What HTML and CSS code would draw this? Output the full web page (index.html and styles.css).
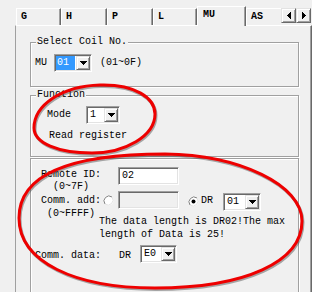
FILE: index.html
```html
<!DOCTYPE html>
<html lang="en">
<head>
    <meta charset="UTF-8">
    <title>MU settings</title>
    <link rel="stylesheet" href="styles.css">
</head>
<body>
  <div class="window">
    <div class="tabs">
      <div class="tab tab-g">G</div>
      <div class="tab tab-h">H</div>
      <div class="tab tab-p">P</div>
      <div class="tab tab-l">L</div>
      <div class="tab active">MU</div>
      <div class="tab last">AS</div>
      <div class="scroll">
        <span class="sbtn"><svg width="4" height="7" viewBox="0 0 4 7"><path d="M4 0v7h-1v-1h-1v-1h-1v-1h-1v-1h1v-1h1v-1h1v-1z"/></svg></span>
        <span class="sbtn"><svg width="4" height="7" viewBox="0 0 4 7"><path d="M0 0v7h1v-1h1v-1h1v-1h1v-1h-1v-1h-1v-1h-1v-1z"/></svg></span>
      </div>
    </div>

    <div class="panel">
      <fieldset class="group">
        <legend>Select Coil No.</legend>
        <div class="coil-row">
          <span>MU</span>
          <div class="combo coil-combo">
            <span class="val sel">01</span>
            <span class="drop"><svg width="7" height="4" viewBox="0 0 7 4"><path d="M0 0h7v1h-1v1h-1v1h-1v1h-1v-1h-1v-1h-1v-1h-1z"/></svg></span>
          </div>
          <span class="range">(01~0F)</span>
        </div>
      </fieldset>

      <fieldset class="group func">
        <legend>Function</legend>
        <div class="mode-row">
          <span>Mode</span>
          <div class="combo mode-combo">
            <span class="val">1</span>
            <span class="drop"><svg width="7" height="4" viewBox="0 0 7 4"><path d="M0 0h7v1h-1v1h-1v1h-1v1h-1v-1h-1v-1h-1v-1h-1z"/></svg></span>
          </div>
        </div>
        <div class="mode-name">Read register</div>
      </fieldset>

      <div class="remote">
        <div class="remote-grid">
          <div class="labels">
            <div class="ln">Remote ID:</div>
            <div class="ln">(0~7F)</div>
            <div class="ln tall gap">Comm. add:</div>
            <div class="ln tall">(0~FFFF)</div>
          </div>
          <div class="inputs">
            <div class="field id-field">02</div>
            <div class="add-row">
              <svg class="radio first" width="11" height="11" viewBox="0 0 11 11">
                <circle cx="5.5" cy="5.5" r="5" fill="#fff"/>
                <path d="M2 9A5 5 0 0 1 9 2" fill="none" stroke="#808080"/>
                <path d="M9 2A5 5 0 0 1 2 9" fill="none" stroke="#e3e3e3"/>
              </svg>
              <div class="field off"></div>
              <svg class="radio on" width="11" height="11" viewBox="0 0 11 11">
                <circle cx="5.5" cy="5.5" r="5" fill="#fff"/>
                <path d="M2 9A5 5 0 0 1 9 2" fill="none" stroke="#808080"/>
                <path d="M9 2A5 5 0 0 1 2 9" fill="none" stroke="#e3e3e3"/>
                <circle cx="5.5" cy="5.5" r="2"/>
              </svg>
              <span class="dr">DR</span>
              <div class="combo dr-combo">
                <span class="val">01</span>
                <span class="drop"><svg width="7" height="4" viewBox="0 0 7 4"><path d="M0 0h7v1h-1v1h-1v1h-1v1h-1v-1h-1v-1h-1v-1h-1z"/></svg></span>
              </div>
            </div>
            <div class="msg">The data length is DR02!The max<br>length of Data is 25!</div>
          </div>
        </div>
        <div class="data-row">
          <span class="lbl">Comm. data:</span>
          <span class="lbl dr2">DR</span>
          <div class="combo data-combo">
            <span class="val">E0</span>
            <span class="drop"><svg width="7" height="4" viewBox="0 0 7 4"><path d="M0 0h7v1h-1v1h-1v1h-1v1h-1v-1h-1v-1h-1v-1h-1z"/></svg></span>
          </div>
        </div>
      </div>
    </div>
  </div>

  <!-- red marks drawn over the dialog -->
  <svg class="marks" width="318" height="298" viewBox="0 0 318 298">
    <g fill="none" stroke-width="3">
      <path d="M100,85 C135,84 155,98 155,114 C155,136 125,153 92,153 C58,153 34,143 34,128 C34,105 62,86 100,85 Z" stroke="rgba(70,70,70,0.45)" transform="translate(1 1.5)"/>
      <path d="M165,154 C240,155 302,185 302,221 C302,262 245,288 155,288 C75,288 19,262 19,218 C19,170 80,154 165,154 Z" stroke="rgba(70,70,70,0.45)" transform="translate(1 1.5)"/>
      <path d="M100,85 C135,84 155,98 155,114 C155,136 125,153 92,153 C58,153 34,143 34,128 C34,105 62,86 100,85 Z" stroke="#ee0000"/>
      <path d="M165,154 C240,155 302,185 302,221 C302,262 245,288 155,288 C75,288 19,262 19,218 C19,170 80,154 165,154 Z" stroke="#ee0000"/>
    </g>
  </svg>
</body>
</html>
```

FILE: styles.css
```css
body {
    margin: 0;
    background: #fff;
    font-family: "Liberation Mono", "DejaVu Sans Mono", monospace;
    font-size: 10px;
    line-height: 12px;
    color: #000;
}
.window {
    width: 312px;
    height: 292px;
    background: #f0f0f0;
    overflow: hidden;
}

/* tab strip */
.tabs {
    display: flex;
    align-items: flex-end;
    height: 25px;
    padding-left: 16px;
}
.tab {
    box-sizing: border-box;
    height: 17px;
    padding: 2px 0 0 4px;
    border-top: 1px solid #fff;
    border-left: 1px solid #fff;
    border-right: 1px solid #696969;
    box-shadow: inset -1px 0 #a0a0a0;
    font-weight: bold;
}
.tab-g { width: 45px; }
.tab-h { width: 46px; }
.tab-p { width: 46px; }
.tab-l { width: 44px; }
.tab.active {
    width: 49px;
    height: 20px;
    margin-bottom: -1px;
    padding-left: 5px;
    background: #f0f0f0;
    position: relative;
    z-index: 1;
}
.tab.last {
    width: 35px;
    border-right: none;
    box-shadow: none;
}
.scroll {
    display: flex;
    align-self: flex-start;
    margin-top: 8px;
}
.sbtn {
    box-sizing: border-box;
    width: 15px;
    height: 15px;
    display: flex;
    align-items: center;
    justify-content: center;
    background: #f0f0f0;
    border: 1px solid;
    border-color: #e3e3e3 #696969 #696969 #e3e3e3;
    box-shadow: inset 1px 1px #fff, inset -1px -1px #a0a0a0;
}

/* tab page */
.panel {
    box-sizing: border-box;
    width: 297px;
    height: 267px;
    margin-left: 15px;
    padding: 10px 0 0 14px;
    border-top: 1px solid #fff;
    border-left: 1px solid #a0a0a0;
    border-right: 1px solid #696969;
    box-shadow: inset -1px 0 #a0a0a0;
    overflow: hidden;
}
.group {
    box-sizing: border-box;
    width: 269px;
    min-width: 0;
    margin: 0;
    padding: 0;
    border: 1px solid #a0a0a0;
    box-shadow: 1px 1px 0 #fff, inset 1px 1px 0 #fff;
}
.group legend {
    margin-left: 5px;
    padding: 0 1px;
    background: #f0f0f0;
}
.coil-row {
    display: flex;
    align-items: center;
    padding: 6px 0 14px 4px;
}
.coil-combo {
    width: 38px;
    margin-left: 7px;
}
.range {
    margin-left: 8px;
}
.func {
    margin-top: 2px;
}
.mode-row {
    display: flex;
    align-items: center;
    padding: 5px 0 0 16px;
}
.mode-combo {
    width: 34px;
    margin-left: 15px;
}
.mode-name {
    margin: 6px 0 0 18px;
    padding-bottom: 14px;
}

/* controls */
.combo {
    box-sizing: border-box;
    display: flex;
    height: 18px;
    padding: 1px;
    background: #fff;
    border: 1px solid;
    border-color: #a0a0a0 #fff #fff #a0a0a0;
    box-shadow: inset 1px 1px #696969, inset -1px -1px #e3e3e3;
}
.combo .val {
    flex: 1;
    line-height: 14px;
    padding-left: 2px;
}
.combo .val.sel {
    background: #3399ff;
    color: #fff;
    margin-right: 1px;
    padding-left: 1px;
}
.drop {
    box-sizing: border-box;
    width: 14px;
    display: flex;
    align-items: center;
    justify-content: center;
    background: #f0f0f0;
    border: 1px solid;
    border-color: #e3e3e3 #696969 #696969 #e3e3e3;
    box-shadow: inset 1px 1px #fff, inset -1px -1px #a0a0a0;
}
.field {
    box-sizing: border-box;
    width: 61px;
    height: 18px;
    padding: 1px 1px 1px 3px;
    line-height: 14px;
    background: #fff;
    border: 1px solid;
    border-color: #a0a0a0 #fff #fff #a0a0a0;
    box-shadow: inset 1px 1px #696969, inset -1px -1px #e3e3e3;
}
.field.off {
    background: #f0f0f0;
}
.radio {
    display: block;
    flex: none;
}

/* remote block */
.remote {
    box-sizing: border-box;
    width: 269px;
    height: 160px;
    margin-top: 1px;
    padding-top: 8px;
    border: 1px solid #a0a0a0;
    box-shadow: 1px 1px 0 #fff, inset 1px 1px 0 #fff;
}
.remote-grid {
    display: flex;
}
.labels {
    width: 60px;
    margin-left: 10px;
    padding-top: 2px;
    text-align: center;
    white-space: nowrap;
}
.labels .tall {
    line-height: 13px;
}
.labels .gap {
    margin-top: 1px;
}
.id-field {
    margin-left: 17px;
}
.add-row {
    display: flex;
    align-items: flex-start;
    margin-top: 6px;
}
.radio.first {
    margin: 4px 0 0 2px;
}
.add-row .field {
    margin-left: 4px;
}
.radio.on {
    margin: 5px 0 0 9px;
}
.dr {
    margin: 4px 0 0 2px;
}
.dr-combo {
    width: 38px;
    margin: 2px 0 0 10px;
}
.msg {
    margin: 5px 0 0 -2px;
    line-height: 12.5px;
    white-space: nowrap;
}
.data-row {
    display: flex;
    align-items: flex-start;
    margin: 4px 0 0 4px;
}
.data-row .lbl {
    margin-top: 5px;
}
.data-row .dr2 {
    margin-left: 18px;
}
.data-combo {
    width: 37px;
    margin-left: 9px;
}

.marks {
    position: absolute;
    left: 0;
    top: 0;
    pointer-events: none;
}
```
